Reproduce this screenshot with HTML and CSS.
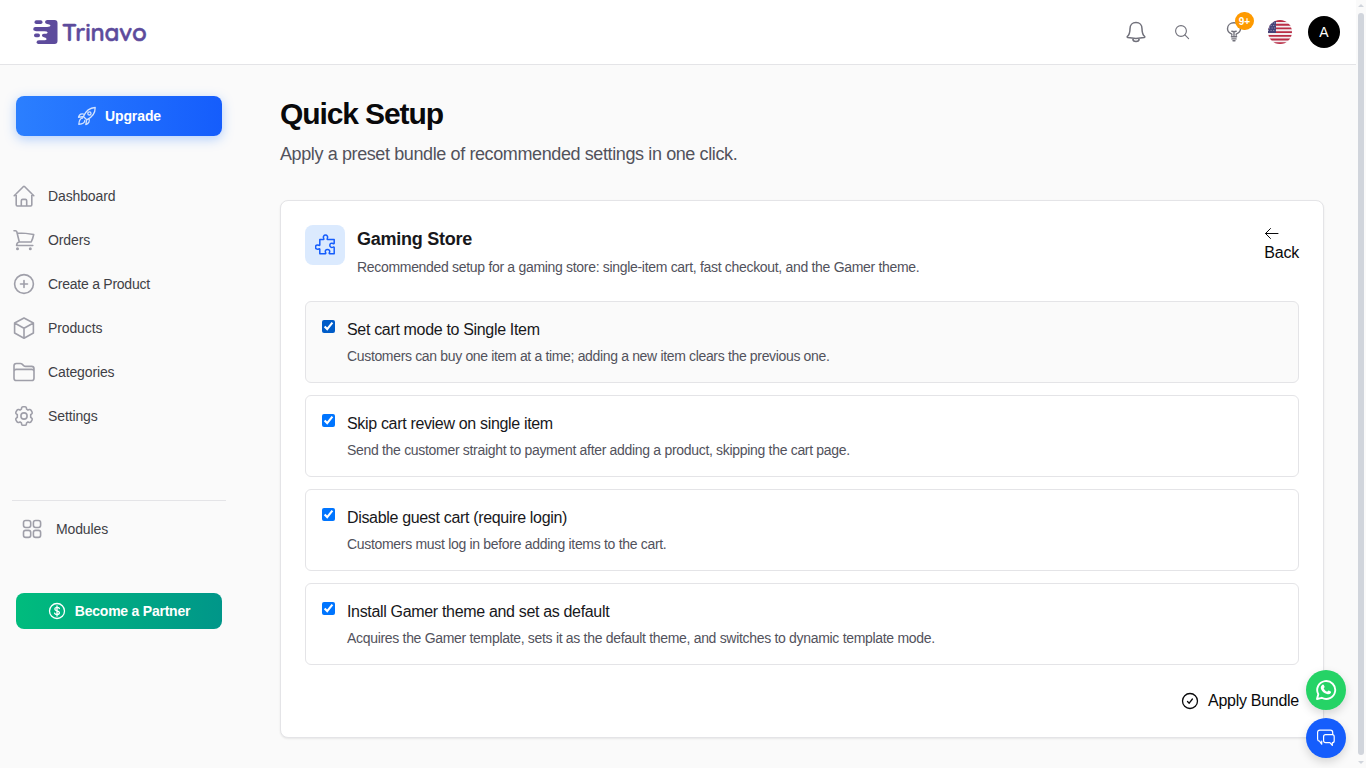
FILE: index.html
```html
<!DOCTYPE html>
<html lang="en">

<head>
  <meta charset="UTF-8">
  <meta name="viewport" content="width=device-width, initial-scale=1.0">
  <title>Quick Setup - Trinavo</title>
  <link rel="stylesheet" href="styles.css">
</head>

<body>
  <header class="topbar">
    <a class="logo" href="#">
      <svg width="25" height="24" viewBox="0 0 25 24">
        <path d="M14 0h7.500q3 0 3 3v18q0 3-3 3H6.500q-3 0-3-1.800T6 20.300h6q2-.3 1.500-1.600-.6-1.100-2.600-1.500-2-.6-2-1.800 0-1.500 2-1.700h2.500q1.500-.5 1.200-1.400-.5-1-3.100-1.100H3.500Q.3 11 .3 9.600 0 7.300 2 7h12q3.500-.3 3.500-1.500Q17 4.400 14 4.100q-2-.4-2-2T14 0z" />
        <rect x="1.500" y=".3" width="8" height="3.700" rx="1.800" />
        <rect x="1" y="13.600" width="6" height="3.600" rx="1.800" />
      </svg>
      <span>Trinavo</span>
    </a>
    <div class="actions">
      <svg class="bell" width="20" height="22" viewBox="0 0 20 22">
        <path d="M10 1.500c-3.700 0-6 2.700-6 6.200 0 3.800-.8 6.200-2.700 7.800-.3.400 0 1 .5 1.100 5.200 1 11.200 1 16.400 0 .5-.1.800-.7.500-1.100-1.900-1.600-2.700-4-2.700-7.800 0-3.500-2.300-6.200-6-6.200zM6.800 17.400c0 2 1.300 3.100 3.200 3.100s3.200-1.100 3.200-3.100" />
      </svg>
      <svg class="search" width="16" height="16" viewBox="0 0 16 16">
        <circle cx="7" cy="7" r="5.400" />
        <path d="M10.900 10.900l3.700 3.700" />
      </svg>
      <div class="tips">
        <svg width="16" height="20" viewBox="0 0 16 20">
          <path d="M5.800 13.300v-1.200C3.200 11 1.500 9.300 1.500 6.800 1.500 3.200 4.300.8 8 .8s6.500 2.400 6.500 6c0 2.500-1.700 4.200-4.300 5.300v1.200M8 13.500V9.800M5.800 9.200L8 9.800l2.200-.6M5.400 14.800h5.200M5.900 16.900h4.200M7 18.800h2" />
        </svg>
        <span class="badge">9+</span>
      </div>
      <svg class="flag" width="24" height="24" viewBox="0 0 24 24">
        <clipPath id="round"><circle cx="12" cy="12" r="12" /></clipPath>
        <g clip-path="url(#round)">
          <rect class="flag-white" width="24" height="24" />
          <path class="flag-red" d="M0 1h24M0 4.700h24M0 8.400h24M0 12.100h24M0 15.800h24M0 19.500h24M0 23.200h24" />
          <rect class="flag-blue" width="8" height="13" />
          <path class="flag-stars" d="M1 3h7M0 5.500h8M1 8h7M0 10.500h8" />
        </g>
      </svg>
      <div class="avatar">A</div>
    </div>
  </header>

  <div class="layout">
    <aside class="sidebar">
      <a class="btn btn-upgrade" href="#">
        <svg width="20" height="20" viewBox="0 0 20 20">
          <path d="M6.400 10.500C8.500 5.600 12 1.700 18.200 1.500c.1 6-3.500 10-8.500 12.300zM7.200 8.300C4.800 7 2.400 8.300 1.500 11.300l4.900-.8M11.900 12.600c1.300 2.500-.2 5-3.100 6l.9-4.800M5.500 12.200c-1.800 0-3.300 1.600-3.700 6.100 4.400-.5 6-2 6-3.900" />
          <circle cx="12.400" cy="7.400" r="1.600" />
        </svg>
        <span>Upgrade</span>
      </a>

      <nav class="menu">
        <a href="#">
          <svg viewBox="0 0 24 24"><path d="M2.200 11.700L11.500 2.500q.5-.5 1 0l9.300 9.200M4.200 9.800v11q0 1.200 1.200 1.200h13.200q1.200 0 1.200-1.200v-11M9.300 22v-5.200q0-1.400 1.400-1.400h2.600q1.400 0 1.400 1.400V22" /></svg>
          <span>Dashboard</span>
        </a>
        <a href="#">
          <svg viewBox="0 0 24 24"><path d="M2 2.800h1.500q1 0 1.300 1L7.300 14M5.200 5q9 0 16.500 1.500-.8 4-2.500 7.500H7.300q-2.700.5-2.700 3.500h16.200" /><circle cx="5.500" cy="20.700" r=".7" /><circle cx="18.300" cy="20.700" r=".7" /></svg>
          <span>Orders</span>
        </a>
        <a href="#">
          <svg viewBox="0 0 24 24"><circle cx="12" cy="12" r="9.400" /><path d="M12 8.500v7M8.500 12h7" /></svg>
          <span class="tight">Create a Product</span>
        </a>
        <a href="#">
          <svg viewBox="0 0 24 24"><path d="M12 2l9.400 5v10L12 22.200 2.600 17V7zM2.600 7l9.400 5.300L21.400 7M12 12.300v9.900" /></svg>
          <span>Products</span>
        </a>
        <a href="#">
          <svg viewBox="0 0 24 24"><path d="M2 18.200V5.800q0-2.300 2.300-2.300h4.200q.9 0 1.600.6l1.800 1.700q.6.600 1.600.6h6.200q2.300 0 2.300 2.300v9.500q0 2.300-2.300 2.300H4.300Q2 20.500 2 18.200zM2 11.600q0-2.200 2.300-2.200h15.400q2.300 0 2.300 2.200" /></svg>
          <span>Categories</span>
        </a>
        <a href="#">
          <svg viewBox="0 0 24 24"><path d="M9.600 3.900q.2-1.200 1.300-1.200h2.200q1.100 0 1.300 1.200l.2 1.300 1.400.9 1.300-.5q1.100-.3 1.700.6l1.100 1.900q.5.900-.4 1.700l-1 .8v2.800l1 .8q.9.800.4 1.700L19 17.800q-.6.900-1.700.6l-1.300-.5-1.400.9-.2 1.300q-.2 1.200-1.300 1.200h-2.200q-1.100 0-1.300-1.200l-.2-1.300-1.400-.9-1.300.5q-1.100.3-1.700-.6l-1.100-1.900q-.5-.9.400-1.700l1-.8v-2.800l-1-.8q-.9-.8-.4-1.700L5 6.200q.6-.9 1.700-.6l1.300.5 1.400-.9z" /><circle cx="12" cy="12" r="3.100" /></svg>
          <span>Settings</span>
        </a>
      </nav>

      <div class="menu menu-modules">
        <a href="#">
          <svg viewBox="0 0 24 24"><rect x="3.500" y="3.500" width="7.200" height="7" rx="2.200" /><rect x="13.400" y="3.500" width="7.200" height="7" rx="2.200" /><rect x="3.500" y="13.400" width="7.200" height="7" rx="2.200" /><rect x="13.400" y="13.400" width="7.200" height="7" rx="2.200" /></svg>
          <span>Modules</span>
        </a>
      </div>

      <a class="btn btn-partner" href="#">
        <svg width="18" height="18" viewBox="0 0 18 18">
          <circle cx="9" cy="9" r="7.500" />
          <path d="M9 4v10M11.400 6.500c-.7-1.600-4.600-1.500-4.600.6 0 2.400 4.600 1.300 4.600 3.700 0 2.200-4.100 2.200-4.800.4" />
        </svg>
        <span>Become a Partner</span>
      </a>
    </aside>

    <main class="content">
      <h1>Quick Setup</h1>
      <p class="lead">Apply a preset bundle of recommended settings in one click.</p>

      <section class="card">
        <div class="card-head">
          <div class="card-icon">
            <svg width="22" height="22" viewBox="1 1 22 22">
              <path d="M5.800 6.500h3.600c.6 0 .6-.7.300-1.200C8.800 3.600 9.900 2 11.500 2s2.700 1.600 1.800 3.300c-.3.500-.3 1.200.3 1.200h6.600v3.700c0 .6-.6.600-1.100.3-1.700-.8-3.300.1-3.300 1.800s1.600 2.600 3.300 1.800c.5-.3 1.100-.3 1.100.3v6.400h-4.500c-.6 0-.6-.6-.3-1.100.8-1.700-.1-3.200-1.900-3.200s-2.700 1.500-1.900 3.200c.3.500.3 1.100-.3 1.100H5.800v-4.500c0-.6-.6-.6-1.100-.3-1.700.8-3.200-.3-3.200-1.900s1.500-2.700 3.200-1.900c.5.300 1.100.3 1.100-.3z" />
            </svg>
          </div>
          <div class="card-title">
            <h2>Gaming Store</h2>
            <p>Recommended setup for a gaming store: single-item cart, fast checkout, and the Gamer theme.</p>
          </div>
          <a class="back" href="#">
            <svg width="16" height="16" viewBox="0 0 16 16"><path d="M14 8.500H1.500M6.500 3.500l-5 5 5 5" /></svg>
            <span>Back</span>
          </a>
        </div>

        <div class="options">
          <label class="option active">
            <input type="checkbox" checked>
            <div>
              <h3>Set cart mode to Single Item</h3>
              <p>Customers can buy one item at a time; adding a new item clears the previous one.</p>
            </div>
          </label>
          <label class="option">
            <input type="checkbox" checked>
            <div>
              <h3>Skip cart review on single item</h3>
              <p>Send the customer straight to payment after adding a product, skipping the cart page.</p>
            </div>
          </label>
          <label class="option">
            <input type="checkbox" checked>
            <div>
              <h3>Disable guest cart (require login)</h3>
              <p>Customers must log in before adding items to the cart.</p>
            </div>
          </label>
          <label class="option">
            <input type="checkbox" checked>
            <div>
              <h3>Install Gamer theme and set as default</h3>
              <p>Acquires the Gamer template, sets it as the default theme, and switches to dynamic template mode.</p>
            </div>
          </label>
        </div>

        <div class="card-foot">
          <button type="button" class="apply">
            <svg width="18" height="18" viewBox="0 0 18 18"><circle cx="9" cy="9" r="7.500" /><path d="M6.500 9.500l1.700 1.700 3.200-4.200" /></svg>
            <span>Apply Bundle</span>
          </button>
        </div>
      </section>
    </main>
  </div>

  <div class="floating">
    <a class="fab fab-whatsapp" href="#">
      <svg width="22" height="22" viewBox="0 0 22 22">
        <path class="bubble" d="M2 20l1.300-4.700A9 9 0 1 1 6.700 18.800z" />
        <path class="phone" d="M7.400 5.800c.5-.5 1.100-.4 1.400.2l.8 1.800c.2.500-.6 1.200-.9 1.600.8 1.600 1.900 2.600 3.600 3.300.4-.3 1-1.300 1.500-1.100l1.900.9c.6.300.4 1-.1 1.800-.8 1-2.300 1.200-3.600.8-3-.9-4.900-2.700-6-5.200-.5-1.500-.2-3 1.400-4.100z" />
      </svg>
    </a>
    <a class="fab fab-chat" href="#">
      <svg width="20" height="20" viewBox="0 0 20 20">
        <path d="M5.700 13.200v3L3.500 13.200q-1.900-.2-1.900-2.300V4.500q0-2.300 2.300-2.300h10.500q2.300 0 2.300 2.200v2.300M9.600 6.700h6.600q2 0 2 2v4q0 2-1.900 2v2.700l-2.400-2.700H9.600q-2 0-2-2v-4q0-2 2-2z" />
      </svg>
    </a>
  </div>

  <div class="scrollbar">
    <span class="arrow-up"></span>
    <span class="thumb"></span>
    <span class="arrow-down"></span>
  </div>
</body>

</html>
```
FILE: styles.css
```css
* {
  box-sizing: border-box;
}

body {
  margin: 0;
  height: 768px;
  overflow: hidden;
  padding-right: 10px;
  background-color: #fafafa;
  color: #09090b;
  font-family: "Liberation Sans", Arial, sans-serif;
  font-size: 16px;
  line-height: 24px;
}

h1, h2, h3, p {
  margin: 0;
}

a {
  color: inherit;
  text-decoration: none;
}

svg {
  flex-shrink: 0;
  fill: none;
  stroke-linecap: round;
  stroke-linejoin: round;
}

/* Top bar */
.topbar {
  display: flex;
  align-items: center;
  justify-content: space-between;
  height: 65px;
  padding: 0 16px 1px 33px;
  background-color: #ffffff;
  border-bottom: 1px solid #e4e4e7;
}

.logo {
  display: flex;
  align-items: center;
  gap: 4px;
  color: #5d4b9c;
  font-family: Quicksand, Lato, sans-serif;
  font-size: 24px;
  font-weight: 600;
  letter-spacing: -0.15px;
  -webkit-text-stroke: 0.5px #5d4b9c;
}

.logo svg {
  fill: #5d4b9c;
}

.actions {
  display: flex;
  align-items: center;
  stroke: #71717b;
  stroke-width: 1.5;
}

.bell {
  margin-right: 28px;
}

.search {
  margin-right: 36px;
  stroke-width: 1.1;
}

.tips {
  position: relative;
  display: flex;
  width: 16px;
  margin-right: 26px;
  stroke-width: 1.4;
}

.badge {
  position: absolute;
  top: -10px;
  left: 9px;
  width: 19px;
  height: 18px;
  border-radius: 9px;
  background-color: #fe9a00;
  color: #ffffff;
  font-size: 10px;
  font-weight: bold;
  line-height: 19px;
  text-align: center;
}

.flag {
  margin-right: 16px;
  stroke-linecap: butt;
}

.flag-white {
  fill: #f3edf0;
  stroke: none;
}

.flag-red {
  stroke: #b92d45;
  stroke-width: 1.85;
}

.flag-blue {
  fill: #454278;
  stroke: none;
}

.flag-stars {
  stroke: #aaa9c5;
  stroke-width: 0.9;
  stroke-dasharray: 1 1.6;
}

.avatar {
  width: 32px;
  height: 32px;
  border-radius: 50%;
  background-color: #000000;
  color: #ffffff;
  font-size: 14px;
  line-height: 32px;
  text-align: center;
}

/* Layout */
.layout {
  display: flex;
}

.sidebar {
  width: 240px;
  padding: 31px 14px 0 12px;
}

.btn {
  display: flex;
  align-items: center;
  justify-content: center;
  gap: 8px;
  width: 206px;
  margin-left: 4px;
  border-radius: 8px;
  color: #ffffff;
  font-size: 14px;
  font-weight: bold;
  letter-spacing: -0.1px;
  stroke: #ffffff;
  stroke-width: 1.3;
}

.btn-upgrade {
  height: 40px;
  background: linear-gradient(to right, #2b7fff, #155dfc);
  box-shadow: 0 3px 12px rgba(43, 127, 255, 0.35);
}

.btn-upgrade svg {
  opacity: 0.8;
}

.btn-partner {
  height: 36px;
  margin-top: 42px;
  gap: 9px;
  background: linear-gradient(to right, #00bc7d, #009689);
  letter-spacing: -0.23px;
}

.menu {
  margin-top: 38px;
}

.menu a {
  display: flex;
  align-items: center;
  gap: 12px;
  height: 44px;
  color: #3f3f46;
  font-size: 14px;
  letter-spacing: -0.12px;
}

.menu .tight {
  letter-spacing: -0.25px;
}

.menu svg {
  width: 24px;
  height: 24px;
  stroke: #9f9fa9;
  stroke-width: 1.6;
}

.menu-modules {
  width: 214px;
  margin-top: 62px;
  padding: 6px 8px 0;
  border-top: 1px solid #e4e4e7;
}

.content {
  flex: 1;
  padding: 29px 32px 0 40px;
}

h1 {
  font-size: 30px;
  line-height: 40px;
  letter-spacing: -1.1px;
}

.lead {
  margin-top: 6px;
  color: #52525c;
  font-size: 18px;
  line-height: 28px;
  letter-spacing: -0.39px;
}

/* Card */
.card {
  height: 538px;
  margin-top: 32px;
  padding: 24px;
  background-color: #ffffff;
  border: 1px solid #e4e4e7;
  border-radius: 8px;
  box-shadow: 0 1px 2px rgba(0, 0, 0, 0.08);
}

.card-head {
  display: flex;
  height: 76px;
}

.card-icon {
  display: flex;
  align-items: center;
  justify-content: center;
  width: 40px;
  height: 40px;
  border-radius: 8px;
  background-color: #dbeafe;
  stroke: #155dfc;
  stroke-width: 1.5;
}

.card-icon svg {
  margin-left: 1px;
}

.card-title {
  flex: 1;
  margin-left: 12px;
}

h2 {
  color: #18181b;
  font-size: 18px;
  line-height: 28px;
  letter-spacing: -0.25px;
}

.card-title p {
  margin-top: 4px;
}

.card-title p,
.option p {
  color: #52525c;
  font-size: 14px;
  line-height: 20px;
  letter-spacing: -0.31px;
}

.back svg {
  display: block;
  stroke: #09090b;
  stroke-width: 1;
}

.back span {
  display: block;
  letter-spacing: -0.2px;
}

.options {
  display: flex;
  flex-direction: column;
  gap: 12px;
}

.option {
  display: flex;
  height: 82px;
  padding: 16px;
  border: 1px solid #e4e4e7;
  border-radius: 6px;
}

.option.active {
  background-color: #fafafa;
}

.option input {
  width: 13px;
  height: 13px;
  margin: 2px 12px 0 0;
  accent-color: #0075ff;
}

.option.active input {
  accent-color: #005cc8;
}

h3 {
  color: #18181b;
  font-size: 16px;
  font-weight: normal;
  line-height: 24px;
  letter-spacing: -0.33px;
}

.option p {
  margin-top: 4px;
}

.option.active p {
  letter-spacing: -0.34px;
}

.card-foot {
  display: flex;
  justify-content: flex-end;
  margin-top: 24px;
}

.apply {
  display: flex;
  align-items: center;
  gap: 9px;
  padding: 0;
  border: none;
  background: none;
  color: #09090b;
  font: inherit;
  letter-spacing: -0.28px;
  stroke: #09090b;
  stroke-width: 1.3;
}

/* Chat buttons over the page */
.floating {
  position: fixed;
  right: 20px;
  bottom: 10px;
  display: flex;
  flex-direction: column;
  gap: 8px;
}

.fab {
  display: flex;
  align-items: center;
  justify-content: center;
  width: 40px;
  height: 40px;
  border-radius: 50%;
  box-shadow: 0 4px 10px rgba(0, 0, 0, 0.15);
}

.fab-whatsapp {
  background-color: #25d366;
}

.bubble {
  stroke: #ffffff;
  stroke-width: 1.9;
}

.phone {
  fill: #ffffff;
}

.fab-chat {
  background-color: #155dfc;
  stroke: #ffffff;
  stroke-width: 1.2;
}

.scrollbar {
  position: fixed;
  top: 0;
  right: 0;
  display: flex;
  flex-direction: column;
  align-items: center;
  justify-content: space-between;
  width: 10px;
  height: 100%;
  padding: 4px 0;
  background-color: #fafafa;
}

.thumb {
  width: 6px;
  height: 742px;
  border-radius: 3px;
  background-color: #d1d5dc;
}

.arrow-up,
.arrow-down {
  border: 3px solid transparent;
  border-top: none;
  border-bottom-color: #d1d5dc;
}

.arrow-down {
  border-top: 3px solid #d1d5dc;
  border-bottom: none;
}
```
